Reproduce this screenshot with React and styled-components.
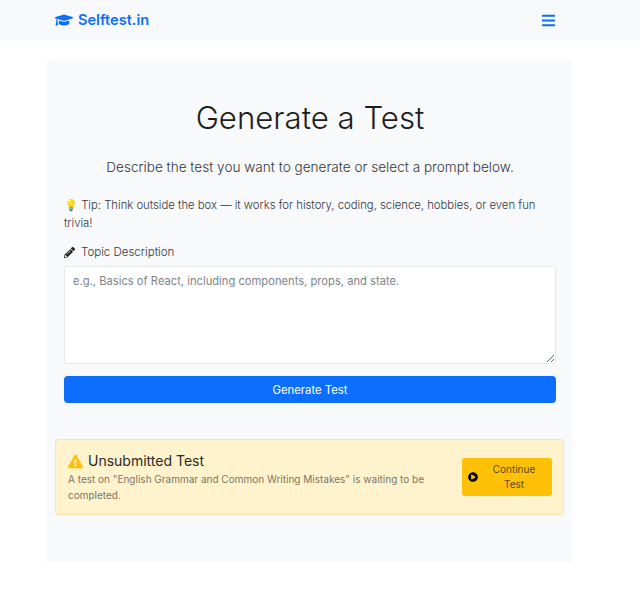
import React from 'react';
import styled, { createGlobalStyle } from 'styled-components';
import { FaGraduationCap, FaBars, FaPencilAlt, FaExclamationTriangle, FaPlayCircle } from 'react-icons/fa';

const blue = '#0d6efd';

const GlobalStyle = createGlobalStyle`
    body {
        margin: 0;
        background: #fff;
        font-family: Inter, "Liberation Sans", sans-serif;
        color: #212529;
    }
`;

const Navbar = styled.nav`
    display: flex;
    align-items: center;
    justify-content: space-between;
    height: 40px;
    padding: 0 84px 0 55px;
    background: #f8f9fa;
    box-shadow: 0 1px 2px rgba(0, 0, 0, 0.02);
`;

const Brand = styled.a`
    display: flex;
    align-items: center;
    gap: 5px;
    color: ${blue};
    font-size: 14.6px;
    font-weight: 600;
    svg { font-size: 18px; }
`;

const MenuIcon = styled(FaBars)`
    color: ${blue};
    font-size: 15px;
`;

const Card = styled.main`
    width: 525px;
    height: 502px;
    margin: 20px 0 0 47px;
    padding: 38px 16px 0 17px;
    box-sizing: border-box;
    background: #f8f9fa;
    box-shadow: 0 0 8px rgba(0, 0, 0, 0.025);
`;

const Title = styled.h1`
    margin: 0;
    text-align: center;
    font-size: 31.2px;
    line-height: 40px;
    font-weight: 300;
    color: #1b1e21;
`;

const Lead = styled.p`
    margin: 19px 0 0;
    text-align: center;
    font-size: 13.6px;
    line-height: 21px;
    font-weight: 300;
    color: #33383d;
`;

const Tip = styled.p`
    margin: 18px 0 0;
    font-size: 11.3px;
    line-height: 18px;
    font-weight: 300;
    color: #33383d;
`;

const Label = styled.label`
    display: flex;
    align-items: center;
    gap: 6px;
    margin-top: 11px;
    font-size: 11.5px;
    line-height: 18px;
    font-weight: 300;
    color: #33383d;
    svg { font-size: 11px; color: #212529; }
`;

const TextArea = styled.textarea`
    display: block;
    width: 100%;
    height: 98px;
    margin-top: 5px;
    padding: 6px 8px;
    box-sizing: border-box;
    background: #fff;
    border: 1px solid #e6e8ea;
    border-radius: 3px;
    font-family: inherit;
    font-size: 11.2px;
    line-height: 17px;
    &::placeholder { color: #7d848b; }
`;

const SubmitButton = styled.button`
    display: block;
    width: 100%;
    height: 27px;
    margin-top: 12px;
    background: ${blue};
    border: 0;
    border-radius: 4px;
    color: #fff;
    font-family: inherit;
    font-size: 11.3px;
`;

const Alert = styled.section`
    display: flex;
    align-items: center;
    justify-content: space-between;
    height: 76px;
    margin: 36px -8px 0 -9px;
    padding: 0 11px 0 12px;
    box-sizing: border-box;
    background: #fff3cd;
    border: 1px solid #fde5a5;
    border-radius: 3px;
`;

const AlertBody = styled.div`
    width: 370px;
`;

const AlertTitle = styled.h2`
    display: flex;
    align-items: center;
    gap: 5px;
    margin: 0 0 1px;
    font-size: 14px;
    line-height: 20px;
    font-weight: 400;
    color: #2b2a24;
    svg { font-size: 15px; color: #ffc107; }
`;

const AlertText = styled.p`
    margin: 0;
    font-size: 10px;
    line-height: 15.5px;
    color: #7c7662;
`;

const ContinueButton = styled.button`
    display: flex;
    align-items: center;
    width: 90px;
    height: 38px;
    padding: 0 2px 0 6px;
    box-sizing: border-box;
    background: #ffc107;
    border: 0;
    border-radius: 3px;
    color: #5c4a10;
    font-family: inherit;
    font-size: 10px;
    line-height: 15.5px;
    svg { flex: none; font-size: 10px; color: #000; }
    span { flex: 1; padding: 0 8px; text-align: center; }
`;

export default function App() {
    return (
        <>
            <GlobalStyle />
            <Navbar>
                <Brand><FaGraduationCap />Selftest.in</Brand>
                <MenuIcon />
            </Navbar>
            <Card>
                <Title>Generate a Test</Title>
                <Lead>Describe the test you want to generate or select a prompt below.</Lead>
                <Tip>💡 Tip: Think outside the box — it works for history, coding, science, hobbies, or even fun trivia!</Tip>
                <Label><FaPencilAlt />Topic Description</Label>
                <TextArea placeholder="e.g., Basics of React, including components, props, and state." />
                <SubmitButton>Generate Test</SubmitButton>
                <Alert>
                    <AlertBody>
                        <AlertTitle><FaExclamationTriangle />Unsubmitted Test</AlertTitle>
                        <AlertText>A test on "English Grammar and Common Writing Mistakes" is waiting to be completed.</AlertText>
                    </AlertBody>
                    <ContinueButton><FaPlayCircle /><span>Continue Test</span></ContinueButton>
                </Alert>
            </Card>
        </>
    );
}
